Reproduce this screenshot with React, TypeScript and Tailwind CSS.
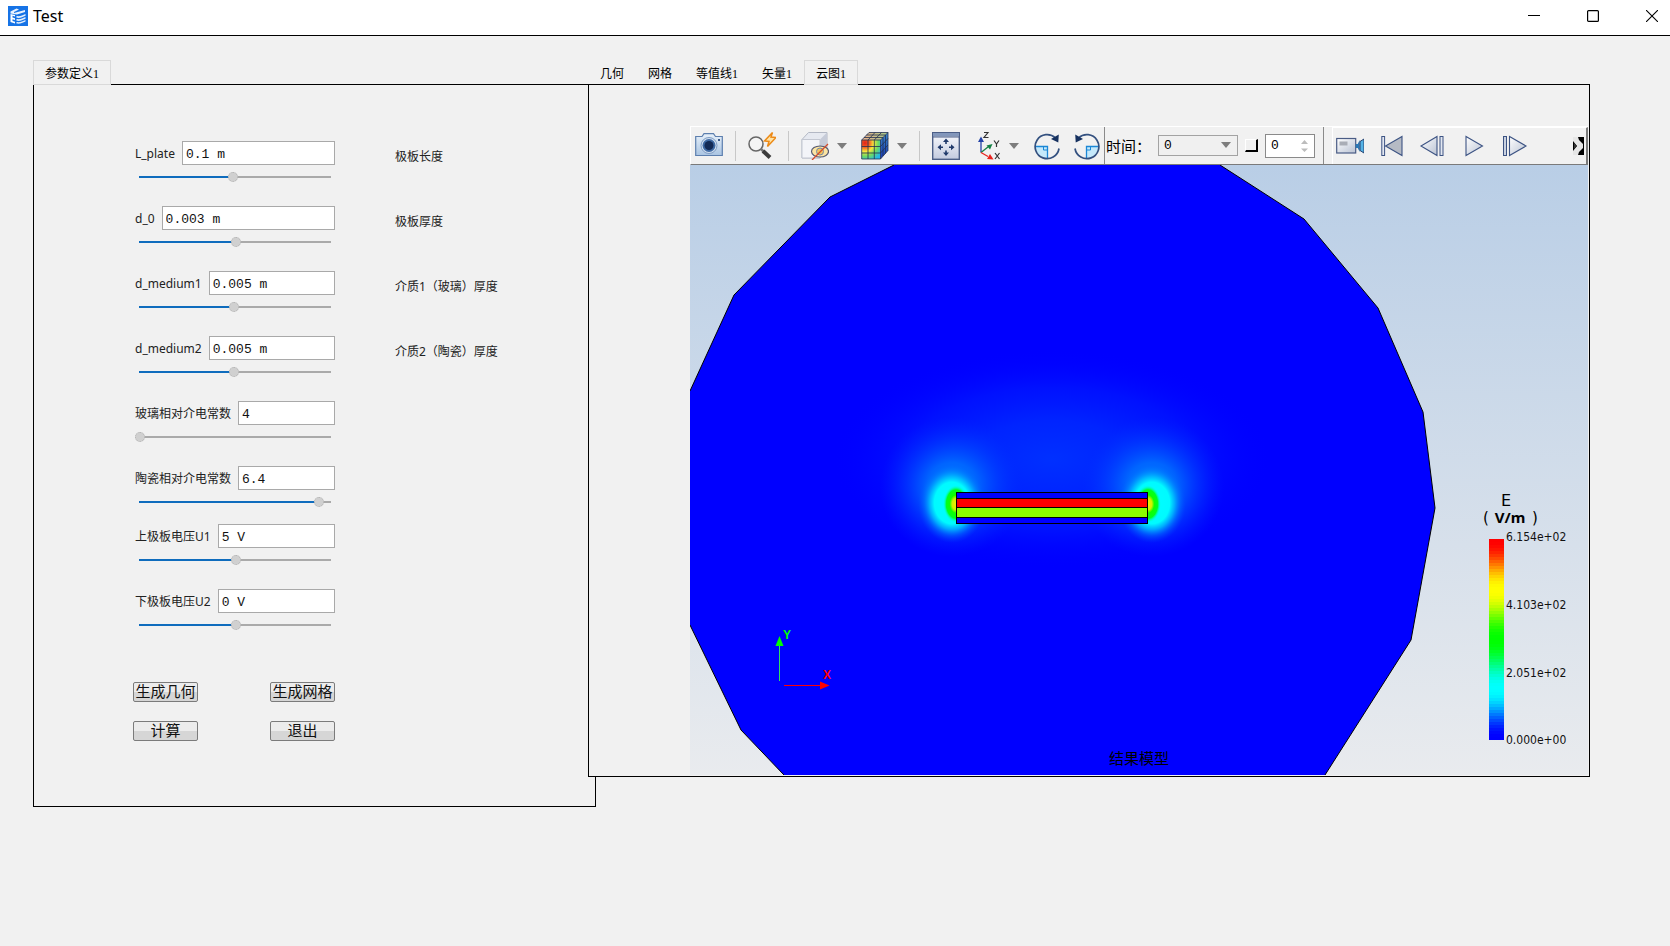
import { useId, useState } from 'react';
import type { ReactNode } from 'react';
import clsx from 'clsx';

type Param = {
  label: string;
  value: string;
  position: number;
  note?: string;
};

const SLIDER_MAX = 190;

const GEOMETRY_PARAMS: Param[] = [
  { label: 'L_plate', value: '0.1 m', position: 93, note: '极板长度' },
  { label: 'd_0', value: '0.003 m', position: 96, note: '极板厚度' },
  { label: 'd_medium1', value: '0.005 m', position: 94, note: '介质1（玻璃）厚度' },
  { label: 'd_medium2', value: '0.005 m', position: 94, note: '介质2（陶瓷）厚度' },
  { label: '玻璃相对介电常数', value: '4', position: 0 },
  { label: '陶瓷相对介电常数', value: '6.4', position: 179 },
];

const VOLTAGE_PARAMS: Param[] = [
  { label: '上极板电压U1', value: '5 V', position: 96 },
  { label: '下极板电压U2', value: '0 V', position: 96 },
];

const RESULT_TABS = ['几何', '网格', '等值线1', '矢量1', '云图1'];

const RAINBOW = [
  [255, 0, 0],
  [255, 255, 0],
  [0, 255, 0],
  [0, 255, 255],
  [0, 0, 255],
];

// cosine easing between the five key colours, t = 0 is the maximum
function rainbow(t: number) {
  const scaled = Math.min(t, 0.9999) * 4;
  const i = Math.floor(scaled);
  const k = (1 - Math.cos(Math.PI * (scaled - i))) / 2;
  const [r, g, b] = RAINBOW[i].map((c, n) => Math.round(c + (RAINBOW[i + 1][n] - c) * k));
  return `rgb(${r},${g},${b})`;
}

function TitleBar() {
  return (
    <header className="flex h-9 items-start justify-between border-b border-black bg-white pr-3 pl-2">
      <div className="flex h-8 items-center gap-[5px]">
        <svg width="20" height="20" viewBox="0 0 20 20">
          <rect width="20" height="20" fill="#1673e6" />
          <path d="M2.500 5.500 8.500 2.500l2.500 1-5 2.500v1l11-3v2L9 8.500 2.500 7.500z" fill="#e9f2fd" />
          <path d="M2.500 8v8L7 17.500v-1.800l-2.500-.7v-1.800L7 14v-1.800l-2.500-.7V9.800L7 10.500V9z" fill="#fff" />
          <path d="M8.500 10c3.500.5 6-.5 9-2v1.800c-3 1.500-5.500 2.500-9 2zM8.500 13c3.500.5 6-.5 9-2v1.800c-3 1.500-5.500 2.500-9 2zM8.500 16c3.500.5 6-.5 9-2v1.600c-3 1.500-5.500 2.500-9 2z" fill="#e3effc" />
        </svg>
        <h1 className="text-base leading-5 text-black">Test</h1>
      </div>
      <div className="flex h-8 items-center gap-[47px]">
        <button type="button" aria-label="最小化">
          <svg width="12" height="12" viewBox="0 0 12 12" className="block">
            <path d="M0 5.500h12" stroke="#000" />
          </svg>
        </button>
        <button type="button" aria-label="最大化">
          <svg width="12" height="12" viewBox="0 0 12 12" className="block">
            <rect x=".6" y=".6" width="10.800" height="10.800" rx="1" fill="none" stroke="#000" strokeWidth="1.200" />
          </svg>
        </button>
        <button type="button" aria-label="关闭">
          <svg width="12" height="12" viewBox="0 0 12 12" className="block">
            <path d="m0 0 12 12M12 0 0 12" stroke="#000" strokeWidth="1.100" />
          </svg>
        </button>
      </div>
    </header>
  );
}

function Tabs({ items, active, onSelect }: { items: string[]; active: string; onSelect?: (tab: string) => void }) {
  return (
    <div role="tablist" className="relative -mb-px flex">
      {items.map((tab) => (
        <button
          key={tab}
          type="button"
          role="tab"
          aria-selected={tab === active}
          onClick={() => onSelect?.(tab)}
          className={clsx(
            "h-[25px] border px-[11px] pt-0.5 font-['Liberation_Serif','Noto_Sans_CJK_SC',sans-serif] text-xs leading-5 whitespace-nowrap text-black",
            tab === active ? 'border-[#d9d9d9] bg-[#f1f1f1]' : 'border-transparent'
          )}
        >
          {tab}
        </button>
      ))}
    </div>
  );
}

function ParamRow({ param }: { param: Param }) {
  const id = useId();
  const [text, setText] = useState(param.value);
  const [position, setPosition] = useState(param.position);
  const percent = (position / SLIDER_MAX) * 100;

  return (
    <div className="flex items-start gap-[60px]">
      <div className="w-[200px] shrink-0">
        <div className="flex h-6 gap-[7px]">
          <label htmlFor={id} className="text-xs leading-[26px] whitespace-nowrap text-[#222]">
            {param.label}
          </label>
          <input
            id={id}
            type="text"
            value={text}
            onChange={(e) => setText(e.target.value)}
            className="h-6 w-0 min-w-0 flex-1 border border-[#a9a9a9] bg-white px-[3px] pt-0.5 font-['Liberation_Mono','Noto_Sans_CJK_SC',monospace] text-[13px] leading-5 text-[#111] outline-none"
          />
        </div>
        <input
          type="range"
          aria-label={param.label}
          min={0}
          max={SLIDER_MAX}
          value={position}
          onChange={(e) => setPosition(Number(e.target.value))}
          style={{ backgroundImage: `linear-gradient(to right, #0f6cbd ${percent}%, #aaaaaa ${percent}%)` }}
          className="block h-6 w-full appearance-none bg-[length:calc(100%-8px)_2px] bg-center bg-no-repeat outline-none [&::-webkit-slider-thumb]:size-2.5 [&::-webkit-slider-thumb]:appearance-none [&::-webkit-slider-thumb]:rounded-full [&::-webkit-slider-thumb]:border [&::-webkit-slider-thumb]:border-dotted [&::-webkit-slider-thumb]:border-[#b0b0b0] [&::-webkit-slider-thumb]:bg-[#d0d0d0]"
        />
      </div>
      {param.note && <p className="text-xs leading-8 whitespace-nowrap text-[#222]">{param.note}</p>}
    </div>
  );
}

function ActionButton({ children }: { children: ReactNode }) {
  return (
    <button
      type="button"
      className="flex h-5 w-[65px] items-center justify-center rounded-xs border border-[#7b7b7b] bg-linear-to-b from-[#ececec] from-50% to-[#d6d6d6] to-50% pb-0.5 text-[15px] leading-4 whitespace-nowrap text-[#111]"
    >
      {children}
    </button>
  );
}

function ParamPanel() {
  return (
    <section className="min-w-0 flex-[563_1_0%]">
      <Tabs items={['参数定义1']} active="参数定义1" />
      <div className="border border-black pt-14 pb-[65px] pl-[99px]">
        <div className="flex flex-col gap-[17px] pl-0.5">
          {GEOMETRY_PARAMS.map((p) => (
            <ParamRow key={p.label} param={p} />
          ))}
        </div>
        <div className="mt-2.5 flex flex-col gap-[17px] pl-0.5">
          {VOLTAGE_PARAMS.map((p) => (
            <ParamRow key={p.label} param={p} />
          ))}
        </div>
        <div className="mt-[45px] grid w-[202px] grid-cols-2 justify-between gap-x-[7px] gap-y-[19px] [&>:nth-child(even)]:justify-self-end">
          <ActionButton>生成几何</ActionButton>
          <ActionButton>生成网格</ActionButton>
          <ActionButton>计算</ActionButton>
          <ActionButton>退出</ActionButton>
        </div>
      </div>
    </section>
  );
}

function ToolButton({ label, className, children }: { label: string; className?: string; children: ReactNode }) {
  return (
    <button type="button" aria-label={label} className={clsx('size-7 shrink-0', className)}>
      <svg width="28" height="28" viewBox="0 0 28 28" className="block">
        {children}
      </svg>
    </button>
  );
}

function MenuArrow({ label, className }: { label: string; className?: string }) {
  return (
    <button type="button" aria-label={label} className={clsx('shrink-0', className)}>
      <svg width="10" height="6" viewBox="0 0 10 6" className="block">
        <path d="M0 0h10L5 6z" fill="#7d7d7d" />
      </svg>
    </button>
  );
}

function Separator() {
  return <span className="mx-3 h-[30px] w-px shrink-0 bg-[#c8c8c8]" />;
}

function RotateIcon() {
  return (
    <>
      <path d="M2.500 14.500h12v12C8 26 3 21 2.500 14.500z" fill="#c5e9fb" />
      <path d="M2 14.500h12.500v12" fill="none" stroke="#1b87d6" strokeWidth="1.300" />
      <path d="M10.500 14.500v3.500h4" fill="none" stroke="#1b87d6" />
      <path d="M22.500 6A12 12 0 1 0 26 16.500" fill="none" stroke="#33507f" strokeWidth="1.700" />
      <path d="m25.800 2.500-.5 8-7.300-3.500z" fill="#16315f" />
    </>
  );
}

function ViewTools() {
  return (
    <div className="flex shrink-0 items-center pr-[3px] pl-1">
      <ToolButton label="截图">
        <defs>
          <linearGradient id="camBody" x1="0" y1="0" x2="0" y2="1">
            <stop offset="0" stopColor="#e8f1fa" />
            <stop offset="1" stopColor="#a9c4e2" />
          </linearGradient>
        </defs>
        <path d="M.7 4.500H7l2-2.800h9.500l2 2.800h6.800v19H.7z" fill="url(#camBody)" stroke="#5d7fae" strokeWidth="1.200" />
        <circle cx="14" cy="13.500" r="8" fill="#d3e0ef" stroke="#7d9bc4" />
        <circle cx="14" cy="13.500" r="6.500" fill="#3e69a3" />
        <circle cx="14" cy="13.500" r="4.500" fill="#132a55" />
        <rect x="23" y="7" width="2" height="2" fill="#3d5c8c" />
      </ToolButton>
      <Separator />
      <ToolButton label="快速缩放">
        <circle cx="8" cy="12" r="7" fill="#f5f5f5" stroke="#666" strokeWidth="1.500" />
        <path d="m13 17 2.500 2.500" stroke="#777" strokeWidth="2.500" />
        <path d="m15 19 7 6.500" stroke="#3c3c3c" strokeWidth="4" />
        <path d="M24.500.500 16.500 9l4.500.5-1.500 5 8.500-9-5-.4z" fill="#ffe3a6" stroke="#ec8a17" strokeWidth="1.500" />
      </ToolButton>
      <Separator />
      <ToolButton label="显示隐藏">
        <path d="M1 7.500 7.500.500H26v18L19 26H1z" fill="#e6e9f0" stroke="#b3b8c4" />
        <path d="M1 7.500h18V26H1z" fill="#f3f4f8" stroke="#c3c7d1" />
        <path d="m19 7.500 7-7v18L19 26z" fill="#c6cbd8" />
        <ellipse cx="19" cy="19.500" rx="8.500" ry="5.500" fill="#fbe4a2" stroke="#565a72" strokeWidth="1.200" />
        <circle cx="19" cy="19.500" r="3.500" fill="#f1c45e" stroke="#7388ac" />
        <path d="M27 12 11 28" stroke="#d24a2b" strokeWidth="1.300" />
      </ToolButton>
      <MenuArrow label="显示隐藏选项" className="mr-3.5 ml-2" />
      <ToolButton label="云图显示">
        <defs>
          <radialGradient id="cubeFront" gradientUnits="userSpaceOnUse" cx="4" cy="11" r="19">
            <stop offset="0" stopColor="#e2231a" />
            <stop offset=".22" stopColor="#f25c22" />
            <stop offset=".45" stopColor="#f7e83c" />
            <stop offset=".7" stopColor="#6ddb63" />
            <stop offset="1" stopColor="#22b7ea" />
          </radialGradient>
          <linearGradient id="cubeTop" x1="0" x2="1">
            <stop offset="0" stopColor="#eeb08a" />
            <stop offset="1" stopColor="#a4c98a" />
          </linearGradient>
          <linearGradient id="cubeSide" x1="0" y1="0" x2="0" y2="1">
            <stop offset="0" stopColor="#3c8acb" />
            <stop offset="1" stopColor="#1638b8" />
          </linearGradient>
        </defs>
        <path d="M.7 8 8 .500h19L19.500 8z" fill="url(#cubeTop)" />
        <path d="M.7 8h18.800v19H.7z" fill="url(#cubeFront)" />
        <path d="m19.500 8 7.500-7.500v18L19.500 27z" fill="url(#cubeSide)" />
        <path
          d="M.7 8h18.800v19H.7zL8 .500h19L19.500 8M27 .500v18L19.500 27M.7 14.500h18.800l7.500-8M.7 21h18.800l7.500-8M7 27V8L14 .500M13.300 27V8l7.200-7.500M3 5.500h19V24M5.500 3h19v18.500"
          fill="none"
          stroke="#223050"
          strokeWidth=".8"
        />
      </ToolButton>
      <MenuArrow label="云图显示选项" className="ml-2" />
      <Separator />
      <ToolButton label="适应窗口">
        <defs>
          <linearGradient id="fitBody" x1="0" y1="0" x2="0" y2="1">
            <stop offset="0" stopColor="#fafbfe" />
            <stop offset="1" stopColor="#c3cbdf" />
          </linearGradient>
        </defs>
        <rect x=".7" y=".7" width="26.600" height="26.600" fill="url(#fitBody)" stroke="#4c5f87" strokeWidth="1.400" />
        <path d="M1 1h26v3.500H1z" fill="#8397bb" />
        <path d="M1 5h26" stroke="#4c5f87" />
        <path d="M14 8v4M14 18.500v4M7 15.200h4M17 15.200h4" stroke="#203a6b" strokeWidth="1.600" />
        <path d="m14 6.500-3 3.500h6zM14 24l-3-3.500h6zM5.500 15.200l3.500-3v6zM22.500 15.200l-3.500-3v6z" fill="#203a6b" />
      </ToolButton>
      <ToolButton label="视图方向" className="ml-[15px]">
        <path d="M6 20.500V6" stroke="#2443a8" strokeWidth="1.300" />
        <path d="M6 4.500 3 10h6z" fill="#2443a8" />
        <path d="m6 20.500 7-5.500" stroke="#138043" strokeWidth="1.300" />
        <path d="m17.500 12-6 1.500 3.500 4z" fill="#138043" />
        <path d="m6 20.500 7 4" stroke="#e8231e" strokeWidth="1.300" />
        <path d="m18.500 27.500-6.500-.5 3-5z" fill="#e8231e" />
        <path d="M9 .500h4L9 5.500h4.500M19 8.500l2.500 3.500L24 8.500M21.500 12v3M20 21l4.500 6M24.500 21 20 27" fill="none" stroke="#333" strokeWidth="1.200" />
      </ToolButton>
      <MenuArrow label="视图方向选项" className="ml-1.5" />
      <ToolButton label="顺时针旋转" className="ml-3.5">
        <RotateIcon />
      </ToolButton>
      <ToolButton label="逆时针旋转" className="ml-3">
        <g transform="translate(28) scale(-1 1)">
          <RotateIcon />
        </g>
      </ToolButton>
    </div>
  );
}

function TimeTools() {
  const [step, setStep] = useState('0');
  return (
    <div className="flex shrink-0 items-center gap-[7px] border-x border-[#8a8a8a] pr-2 pl-px">
      <label htmlFor="time" className="w-[45px] text-[15px] leading-5 whitespace-nowrap text-black">
        时间：
      </label>
      <div className="relative">
        <select
          id="time"
          className="block h-[21px] w-20 appearance-none border border-[#a3a3a3] bg-[#f0f0f0] pl-[5px] font-['Liberation_Mono',monospace] text-[13px] leading-[19px] text-black"
        >
          <option>0</option>
        </select>
        <svg width="10" height="6" viewBox="0 0 10 6" className="pointer-events-none absolute top-[7px] right-[7px]">
          <path d="M0 0h10L5 6z" fill="#7d7d7d" />
        </svg>
      </div>
      <button
        type="button"
        aria-label="设置时间"
        className="size-[13px] border-t border-r-2 border-b-2 border-l border-t-white border-r-black border-b-black border-l-white bg-[#f0f0f0]"
      />
      <div className="relative">
        <input
          type="text"
          aria-label="时间步"
          value={step}
          onChange={(e) => setStep(e.target.value)}
          className="block h-6 w-[50px] border border-[#8a8a8a] bg-white pr-4 pl-[5px] font-['Liberation_Mono',monospace] text-[13px] leading-[22px] text-black outline-none"
        />
        <svg width="7" height="12" viewBox="0 0 7 12" className="pointer-events-none absolute top-1.5 right-[7px]">
          <path d="M0 4h7L3.500 0zM0 8.500h7L3.500 12z" fill="#bcbcbc" />
        </svg>
      </div>
    </div>
  );
}

function PlaybackTools() {
  return (
    <div className="ml-2 flex min-w-0 flex-1 items-center border-t border-r-2 border-l border-t-white border-r-[#7a7a7a] border-l-white pr-0.5 pl-[3px]">
      <div className="flex gap-[13px]">
        <ToolButton label="录制动画">
          <defs>
            <linearGradient id="play" x1="0" y1="0" x2="1" y2="1">
              <stop offset="0" stopColor="#ffffff" />
              <stop offset="1" stopColor="#b9c2d3" />
            </linearGradient>
          </defs>
          <rect x=".7" y="6.500" width="19" height="14.500" fill="url(#play)" stroke="#4a5c85" strokeWidth="1.200" />
          <rect x="3.500" y="9.500" width="8" height="4" fill="#a9adb6" />
          <path d="M19.700 12h2l2-4v12l-2-4h-2z" fill="#2b78b5" />
          <path d="M24 9.500 28 7v14l-4-2.500z" fill="#54b3e6" stroke="#25406f" />
        </ToolButton>
        <ToolButton label="第一帧">
          <rect x="4.800" y="4.500" width="2.800" height="19" fill="#e3e8f1" stroke="#3c5383" />
          <path d="M25 4.500v19L8.500 14z" fill="#b5bac4" stroke="#3c5383" strokeWidth="1.100" />
        </ToolButton>
        <ToolButton label="上一帧">
          <path d="M19 4.500v19L3 14z" fill="url(#play)" stroke="#3c5383" strokeWidth="1.100" />
          <rect x="22" y="4.500" width="3" height="19" fill="#e3e8f1" stroke="#3c5383" />
        </ToolButton>
        <ToolButton label="播放">
          <path d="M7 4.500v19L23.500 14z" fill="url(#play)" stroke="#3c5383" strokeWidth="1.100" />
        </ToolButton>
        <ToolButton label="下一帧">
          <rect x="3.500" y="4.500" width="3" height="19" fill="#c9d1e0" stroke="#3c5383" />
          <path d="M9.500 4.500v19L26 14z" fill="url(#play)" stroke="#3c5383" strokeWidth="1.100" />
        </ToolButton>
      </div>
      <button type="button" aria-label="更多" className="ml-auto">
        <svg width="11" height="18" viewBox="0 0 11 18" className="block">
          <rect width="11" height="18" fill="#000" />
          <path d="M0 0h5l1 3 4 4v4l-4 4-1 3H0v-4l4-5-4-5z" fill="#e6e6e6" />
          <path d="M1 6v6l3-3z" fill="#333" />
        </svg>
      </button>
    </div>
  );
}

function ColorLegend() {
  const bands = Array.from({ length: 67 }, (_, i) => i);
  const ticks = [
    { y: 376, label: '6.154e+02' },
    { y: 444, label: '4.103e+02' },
    { y: 512, label: '2.051e+02' },
    { y: 579, label: '0.000e+00' },
  ];
  return (
    <g className="font-['DejaVu_Sans',sans-serif]">
      <text x="816" y="341" textAnchor="middle" className="text-[16px]">
        E
      </text>
      <text x="793" y="358" className="text-[15px]">
        (
      </text>
      <text x="820" y="358" textAnchor="middle" className="font-['Noto_Sans',sans-serif] text-[15px] font-bold">
        V/m
      </text>
      <text x="842" y="358" className="text-[15px]">
        )
      </text>
      {bands.map((i) => (
        <rect key={i} x="799" y={374 + i * 3} width="15" height="3" fill={rainbow(i / 66)} shapeRendering="crispEdges" />
      ))}
      {ticks.map((t) => (
        <text key={t.label} x="816" y={t.y} fill="#111" className="font-['DejaVu_Sans_Condensed','DejaVu_Sans',sans-serif] text-[12px]">
          {t.label}
        </text>
      ))}
    </g>
  );
}

function FieldPlot() {
  return (
    <svg viewBox="0 0 898 610" className="block h-auto w-full" role="img" aria-label="电场强度云图">
      <defs>
        <linearGradient id="sky" x1="0" y1="0" x2="0" y2="1">
          <stop offset="0" stopColor="#b9cee6" />
          <stop offset="1" stopColor="#e9ebee" />
        </linearGradient>
        <radialGradient id="halo">
          <stop offset="0" stopColor="#0030ff" />
          <stop offset=".35" stopColor="#0028ff" stopOpacity=".9" />
          <stop offset=".65" stopColor="#001cff" stopOpacity=".6" />
          <stop offset="1" stopColor="#0000ff" stopOpacity="0" />
        </radialGradient>
        <radialGradient id="spread">
          <stop offset="0" stopColor="#0090ff" />
          <stop offset=".35" stopColor="#0078ff" stopOpacity=".8" />
          <stop offset=".65" stopColor="#0050ff" stopOpacity=".45" />
          <stop offset="1" stopColor="#0028ff" stopOpacity="0" />
        </radialGradient>
        <radialGradient id="edge">
          <stop offset="0" stopColor="#00ffff" />
          <stop offset=".52" stopColor="#00faff" />
          <stop offset=".66" stopColor="#00c0ff" stopOpacity=".85" />
          <stop offset=".82" stopColor="#0088ff" stopOpacity=".4" />
          <stop offset="1" stopColor="#0050ff" stopOpacity="0" />
        </radialGradient>
        <radialGradient id="core">
          <stop offset="0" stopColor="#f0f000" />
          <stop offset=".3" stopColor="#d0f000" />
          <stop offset=".48" stopColor="#10ff00" />
          <stop offset=".75" stopColor="#00ff20" />
          <stop offset="1" stopColor="#00ffff" stopOpacity="0" />
        </radialGradient>
        <clipPath id="domain">
          <path d="M204 0H530L614 54 688 143 733 247 745 343 721 475 635 610H94L51 565 0 460V226L44 130 140 32z" />
        </clipPath>
      </defs>
      <rect width="898" height="610" fill="url(#sky)" />
      <g clipPath="url(#domain)">
        <rect width="898" height="610" fill="#00f" />
        <ellipse cx="362" cy="294" rx="220" ry="110" fill="url(#halo)" />
        <ellipse cx="262" cy="322" rx="72" ry="70" fill="url(#spread)" />
        <ellipse cx="462" cy="322" rx="72" ry="70" fill="url(#spread)" />
        <ellipse cx="262" cy="338" rx="34" ry="40" fill="url(#edge)" />
        <ellipse cx="462" cy="338" rx="34" ry="40" fill="url(#edge)" />
        <ellipse cx="266" cy="339" rx="13" ry="19" fill="url(#core)" />
        <ellipse cx="458" cy="339" rx="13" ry="19" fill="url(#core)" />
      </g>
      <path
        d="M204 0 140 32 44 130 0 226M0 460 51 565 94 610M530 0 614 54 688 143 733 247 745 343 721 475 635 610"
        fill="none"
        stroke="#000"
      />
      <g shapeRendering="crispEdges">
        <rect x="266" y="327" width="192" height="32" fill="#00f" />
        <rect x="266" y="334" width="192" height="9" fill="#f00" />
        <rect x="266" y="343" width="192" height="9" fill="#8cff00" />
        <path d="M266.500 327.500h191v31h-191zM266 333.500h192M266 342.500h192M266 352.500h192" fill="none" stroke="#000" />
      </g>

      <path d="M89.500 481v35" stroke="#30e060" />
      <path d="m89.500 471-4 10h8z" fill="#0f0" />
      <path d="M94 520.500h37" stroke="#f00" />
      <path d="m139.500 520.500-9.500-4v8z" fill="#f00" />
      <g className="font-['Liberation_Sans',sans-serif] text-[12px] font-bold">
        <text x="93" y="474" fill="#0f0">
          Y
        </text>
        <text x="133" y="514" fill="#f00">
          X
        </text>
      </g>

      <text x="419" y="599" fill="#000" className="text-[15px]">
        结果模型
      </text>
      <ColorLegend />
    </svg>
  );
}

function ResultPanel() {
  const [active, setActive] = useState('云图1');
  return (
    <section className="relative z-10 -ml-2 min-w-0 flex-[1002_1_0%]">
      <Tabs items={RESULT_TABS} active={active} onSelect={setActive} />
      <div className="border border-black bg-[#f1f1f1] pt-[41px] pr-px pb-px pl-[101px]">
        <div className="flex h-[39px] overflow-hidden border-t border-b border-l border-t-white border-b-[#7a7a7a] border-l-white">
          <ViewTools />
          <TimeTools />
          <PlaybackTools />
        </div>
        <FieldPlot />
      </div>
    </section>
  );
}

export default function App() {
  return (
    <div className="min-h-screen bg-[#f1f1f1] font-['Noto_Sans','Noto_Sans_CJK_SC',sans-serif]">
      <TitleBar />
      <main className="flex items-start pt-6 pr-20 pl-[33px]">
        <ParamPanel />
        <ResultPanel />
      </main>
    </div>
  );
}
